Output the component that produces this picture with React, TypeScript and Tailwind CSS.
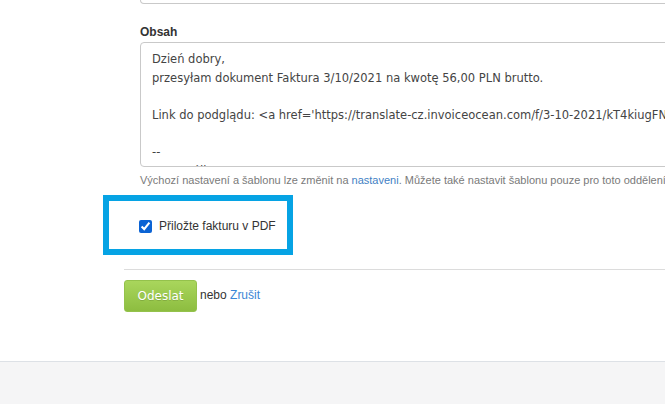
// Formulář pro odeslání faktury e-mailem — spodní část

const lines = [
  'Dzień dobry,',
  'przesyłam dokument Faktura 3/10/2021 na kwotę 56,00 PLN brutto.',
  '',
  "Link do podglądu: <a href='https://translate-cz.invoiceocean.com/f/3-10-2021/kT4kiugFNd8'>https://translate-cz.invoiceocean.com</a>",
  '',
  '--',
  'UPE Spółka z o.o.',
];

export default function App() {
  return (
    <div className="h-screen w-full overflow-hidden bg-[#f5f5f6] font-['Liberation_Sans',Arial,sans-serif] text-[#333]">
      <div className="h-[362px] overflow-hidden border-b border-[#dde1e6] bg-white">
        {/* pole obsahu */}
        <div className="pl-[140px]">
          <div className="h-[4px] w-[640px] rounded-b-[4px] border-x border-b border-[#c9c9c9]" />
          <label className="mt-[20px] block text-[12px] font-bold leading-[16px] text-[#333]">
            Obsah
          </label>
          <div className="mt-[2px] h-[125px] w-[640px] overflow-hidden rounded-[4px] border border-[#c9c9c9] pl-[11px] pt-[7px] font-['DejaVu_Sans',Verdana,sans-serif] text-[11.5px] leading-[18.6px] text-[#444]">
            {lines.map((line, i) => (
              <div key={i} className="h-[18.6px] whitespace-pre">
                {line}
              </div>
            ))}
          </div>
          <p className="mt-[6px] whitespace-nowrap text-[11px] leading-[14px] text-[#7a7a7a]">
            Výchozí nastavení a šablonu lze změnit na{' '}
            <a href="#" className="text-[#3f7fc4]">
              nastaveni
            </a>
            . Můžete také nastavit šablonu pouze pro toto oddělení v nastavení oddělení.
          </p>
        </div>

        {/* příloha PDF */}
        <div className="ml-[103px] mt-[8px] flex h-[60px] w-[190px] items-center border-[6px] border-[#06a3e4] pl-[30px] pt-[2px]">
          <label className="flex items-center gap-[7px] text-[12px] text-[#333]">
            <input type="checkbox" defaultChecked className="m-0 h-[13px] w-[13px] accent-[#0b63d4]" />
            Přiložte fakturu v PDF
          </label>
        </div>

        <div className="ml-[124px] mt-[14px] border-t border-[#dcdcdc]" />

        <div className="ml-[124px] mt-[10px] flex items-center text-[12px]">
          <button className="h-[32px] w-[73px] rounded-[3px] border border-[#94c24c] bg-gradient-to-b from-[#a9d65c] to-[#8dbd40] font-['DejaVu_Sans',Verdana,sans-serif] text-[12px] text-white [text-shadow:0_1px_0_rgba(0,0,0,0.15)]">
            Odeslat
          </button>
          <span className="ml-[3px] -mt-[2px] text-[#333]">
            nebo{' '}
            <a href="#" className="text-[#3a86d6]">
              Zrušit
            </a>
          </span>
        </div>
      </div>
    </div>
  );
}
